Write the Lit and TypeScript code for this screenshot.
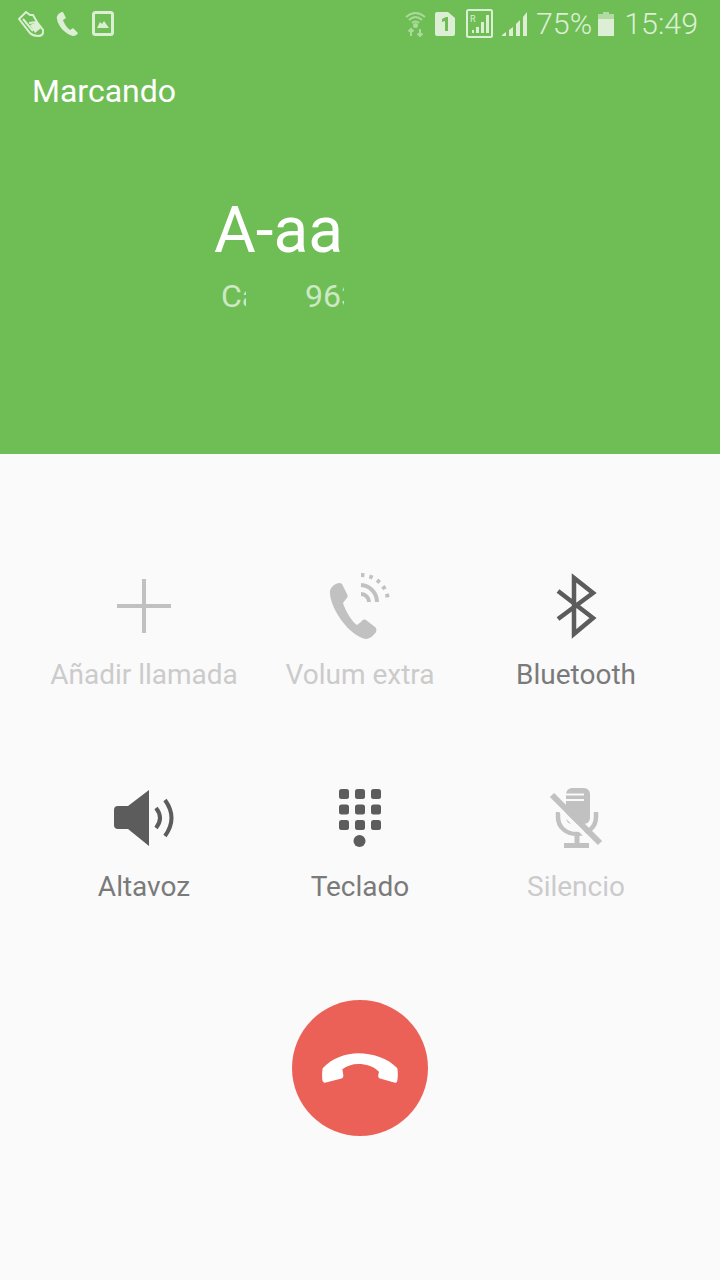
import { LitElement, html, svg, css } from 'lit'
import { customElement } from 'lit/decorators.js'

const icons = {
  plus: svg`<path d="M36 9V63M9 36H63" fill="none" stroke="currentColor" stroke-width="4"/>`,
  volume: svg`
    <path fill="currentColor" d="M15 13C10 14 5 18 6 24C7 39 25 66 42 69C46 69 50 65 52 62C53 59 52 58 51 57L42 50C40 49 38 50 37 52L33 55C28 52 21 40 19 33L22 29C24 27 24 26 23 24L18 14C17 13 16 13 15 13Z"/>
    <g fill="none" stroke="currentColor">
      <path d="M37 24A8 8 0 0 1 45 32" stroke-width="4"/>
      <path d="M37 15A17 17 0 0 1 53 32" stroke-width="4"/>
      <path d="M37 5A27 27 0 0 1 64 32" stroke-width="4" stroke-dasharray="3.500 5"/>
    </g>`,
  bluetooth: svg`<path d="M18 49L53 23L34 8V64L53 48L18 21" fill="none" stroke="currentColor" stroke-width="4.500"/>`,
  speaker: svg`
    <path fill="currentColor" d="M41 8V64L20 47H10A4 4 0 0 1 6 43V28A4 4 0 0 1 10 24H20Z"/>
    <g fill="none" stroke="currentColor" stroke-width="4">
      <path d="M48 26Q56 36 48 46"/>
      <path d="M57 18Q70 36 57 54"/>
    </g>`,
  keypad: svg`
    <g fill="currentColor">
      ${[7, 22.5, 38].map((y) =>
        [15, 31, 47].map((x) => svg`<rect x=${x} y=${y} width="10" height="10" rx="2.5"/>`)
      )}
      <circle cx="35.5" cy="59" r="6"/>
    </g>`,
  mic: svg`
    <rect x="26" y="6" width="24" height="36" rx="6" fill="currentColor"/>
    <path d="M26 12.500H44M26 18H44" stroke="#fafafa" stroke-width="2"/>
    <path d="M18 30V35C18 46 27 52 37 52C47 52 56 46 56 35V30" fill="none" stroke="currentColor" stroke-width="4.500"/>
    <path d="M37 52V61M24 63.500H49" fill="none" stroke="currentColor" stroke-width="5"/>
    <path d="M8 16L56 64" stroke="#fafafa" stroke-width="4"/>
    <path d="M12 13L60 61" stroke="currentColor" stroke-width="6"/>`,
}

const actions = [
  { label: 'Añadir llamada', icon: icons.plus, off: true },
  { label: 'Volum extra', icon: icons.volume, off: true },
  { label: 'Bluetooth', icon: icons.bluetooth, off: false },
  { label: 'Altavoz', icon: icons.speaker, off: false },
  { label: 'Teclado', icon: icons.keypad, off: false },
  { label: 'Silencio', icon: icons.mic, off: true },
]

@customElement('app-root')
export class AppRoot extends LitElement {
  static styles = css`
    :host {
      display: block;
      width: 720px;
      height: 1280px;
      background: #fafafa;
      font-family: Roboto, 'Liberation Sans', sans-serif;
      overflow: hidden;
    }
    .top {
      height: 454px;
      box-sizing: border-box;
      background: #6fbe55;
      color: #fff;
    }
    .status {
      height: 48px;
      box-sizing: border-box;
      padding: 0 22px 0 18px;
      display: flex;
      align-items: center;
      justify-content: space-between;
      color: #dcefd5;
    }
    .status svg { display: block; }
    .group {
      display: flex;
      align-items: center;
      gap: 12px;
    }
    .group.right { gap: 9px; }
    .status-text {
      font-size: 30.400px;
      line-height: 48px;
      font-weight: 300;
    }
    .battery { margin-left: -3px; }
    .time { margin-left: 1px; }
    .state {
      margin: 20px 0 0 32px;
      font-size: 32px;
      line-height: 46px;
    }
    .name {
      margin: 80px 0 0 214px;
      width: 129px;
      overflow: hidden;
      white-space: nowrap;
      font-size: 64px;
      line-height: 74px;
    }
    .sub {
      margin: 8px 0 0 221px;
      display: flex;
      gap: 59px;
      font-size: 32px;
      line-height: 40px;
      color: #cde8c4;
    }
    .sub span {
      overflow: hidden;
      white-space: nowrap;
    }
    .actions {
      display: grid;
      grid-template-columns: repeat(3, 216px);
      row-gap: 87px;
      padding: 116px 36px 0;
    }
    .action {
      display: flex;
      flex-direction: column;
      align-items: center;
      color: #5c5c5c;
    }
    .action.off { color: #c1c1c1; }
    .action svg { display: block; }
    .label {
      margin-top: 13px;
      font-size: 28px;
      line-height: 40px;
      color: #7a7a7a;
      white-space: nowrap;
    }
    .off .label { color: #cbcbcb; }
    .end {
      display: block;
      width: 136px;
      height: 136px;
      margin: 93px auto 0;
      padding: 0;
      border: none;
      border-radius: 50%;
      background: #ec6157;
    }
    .end svg { display: block; }
  `

  statusLeft() {
    return html`
      <svg width="26" height="28" viewBox="0 0 26 28" fill="none" stroke="currentColor" stroke-width="2">
        <path d="M1 9L8 2L12 5H15L19 12L25 20Q26 26 20 26Q15 26 12 23Z"/>
        <path d="M5 9L15 21M11 13L19 12" />
        <path d="M12 15L19 12L23 18L17 23Z" fill="currentColor" stroke="none"/>
      </svg>
      <svg width="24" height="26" viewBox="0 0 24 26">
        <path fill="currentColor" d="M6 1C3 2 0 5 1 8C2 15 9 23 17 25C19 25 21 24 22 22L17 17L14 19C11 17 8 12 7 9L10 7L7 1Z"/>
      </svg>
      <svg width="24" height="26" viewBox="0 0 24 26">
        <rect x="1.500" y="1.500" width="19" height="22" rx="2" fill="none" stroke="currentColor" stroke-width="3"/>
        <path fill="currentColor" d="M5 17L8 11L10 13L12 10L17 17Z"/>
      </svg>
    `
  }

  statusRight() {
    return html`
      <svg width="21" height="26" viewBox="0 0 21 26" opacity=".55" fill="none" stroke="currentColor" stroke-width="2">
        <path d="M1 6Q10.500 -2 20 6M4 9Q10.500 3 17 9M7 12Q10.500 9 14 12"/>
        <circle cx="10.500" cy="14.500" r="1.500" fill="currentColor"/>
        <path d="M6 25V18M3.500 20.500L6 18L8.500 20.500M15 18V25M12.500 22.500L15 25L17.500 22.500"/>
      </svg>
      <svg width="20" height="26" viewBox="0 0 20 26">
        <path fill="currentColor" d="M2 1H13L20 7V23A2 2 0 0 1 18 25H2A2 2 0 0 1 0 23V3A2 2 0 0 1 2 1Z"/>
        <path fill="#6fbe55" d="M7 8L11 6H13V20H10V10L7 11Z"/>
      </svg>
      <svg width="29" height="30" viewBox="0 0 29 30">
        <rect x="3" y="1" width="25" height="27" rx="1.500" fill="none" stroke="currentColor" stroke-width="2"/>
        <path fill="currentColor" d="M8 24H10V21H8ZM12 24H15V18H12ZM17 24H20V13H17ZM22 24H25V6H22Z"/>
        <text x="6" y="13" font-size="9" fill="currentColor">R</text>
      </svg>
      <svg width="25" height="26" viewBox="0 0 25 26">
        <path fill="currentColor" d="M0 25H4V21L0 24ZM7 25H11V16L7 19ZM14 25H18V9L14 13ZM21 25H25V1L21 6Z"/>
      </svg>
      <span class="status-text">75%</span>
      <svg class="battery" width="16" height="24" viewBox="0 0 16 24">
        <path fill="currentColor" opacity=".6" d="M5 0H11V2H16V8H0V2H5Z"/>
        <rect y="7" width="16" height="17" fill="currentColor"/>
      </svg>
      <span class="status-text time">15:49</span>
    `
  }

  render() {
    return html`
      <section class="top">
        <div class="status">
          <div class="group">${this.statusLeft()}</div>
          <div class="group right">${this.statusRight()}</div>
        </div>
        <div class="state">Marcando</div>
        <div class="name">A-aa</div>
        <div class="sub">
          <span style="width: 25px">Casa</span>
          <span style="width: 39px">963</span>
        </div>
      </section>
      <section class="actions">
        ${actions.map(
          (a) => html`
            <div class="action ${a.off ? 'off' : ''}">
              <svg width="72" height="72" viewBox="0 0 72 72">${a.icon}</svg>
              <span class="label">${a.label}</span>
            </div>
          `
        )}
      </section>
      <button class="end" aria-label="Colgar">
        <svg width="136" height="136" viewBox="0 0 136 136">
          <path fill="#fff" d="M30.700 68.300C40 58 54 53.300 66.300 53.300C80 53.300 96 58 105.300 68.300C106 72 106 77 105.300 80.700C105 82 104 83 103 82.700L88 78.500C86.500 78 86 76.500 86.300 75L87 71.700C81 66 74 64 66.300 64C60 64 55 66 50.300 69.300L51.300 75C51.500 76.500 51 78 49.500 78.500L33 82.700C32 83 31 82 30.300 80C30 76 30 72 30.700 68.300Z"/>
        </svg>
      </button>
    `
  }
}
